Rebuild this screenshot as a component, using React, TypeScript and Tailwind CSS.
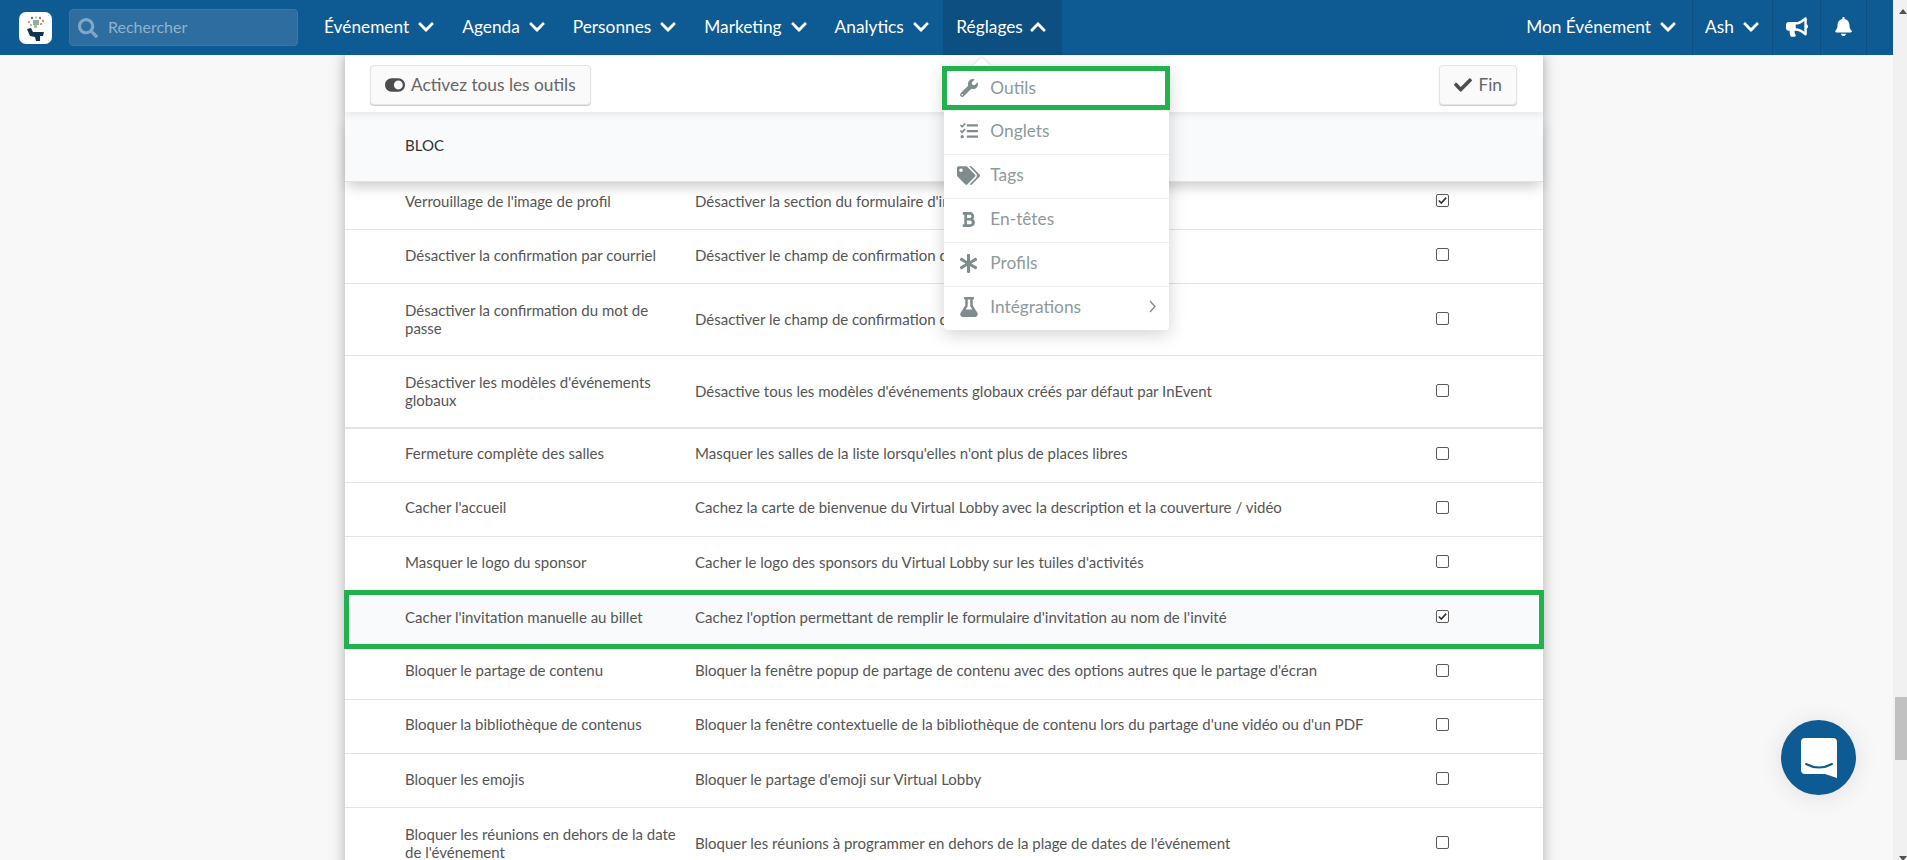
import {
  FaAsterisk,
  FaBell,
  FaBold,
  FaBullhorn,
  FaCheck,
  FaChevronDown,
  FaChevronUp,
  FaFlask,
  FaSearch,
  FaTags,
  FaTasks,
  FaToggleOn,
  FaWrench,
} from 'react-icons/fa';

const LEFT_MENU = ['Événement', 'Agenda', 'Personnes', 'Marketing', 'Analytics'];

const DROPDOWN = [
  { label: 'Outils', Icon: FaWrench, size: 18 },
  { label: 'Onglets', Icon: FaTasks, size: 18 },
  { label: 'Tags', Icon: FaTags, size: 23 },
  { label: 'En-têtes', Icon: FaBold, size: 17 },
  { label: 'Profils', Icon: FaAsterisk, size: 19 },
  { label: 'Intégrations', Icon: FaFlask, size: 20 },
];

const ROWS = [
  { name: "Verrouillage de l'image de profil", desc: "Désactiver la section du formulaire d'inscription pour l'image de profil", checked: true, height: 'h-[48px] pb-[10px]' },
  { name: 'Désactiver la confirmation par courriel', desc: 'Désactiver le champ de confirmation du courriel', height: 'h-[54px] pb-[4px]' },
  { name: 'Désactiver la confirmation du mot de passe', desc: 'Désactiver le champ de confirmation du mot de passe', height: 'h-[72px] pb-[2px]' },
  { name: "Désactiver les modèles d'événements globaux", desc: 'Désactive tous les modèles d\'événements globaux créés par défaut par InEvent', height: 'h-[73px] pb-[2px] border-b-2 border-b-[#dde1e3]' },
  { name: 'Fermeture complète des salles', desc: "Masquer les salles de la liste lorsqu'elles n'ont plus de places libres", height: 'h-[54px] pb-[5px]' },
  { name: "Cacher l'accueil", desc: 'Cachez la carte de bienvenue du Virtual Lobby avec la description et la couverture / vidéo', height: 'h-[54px] pb-[5px]' },
  { name: 'Masquer le logo du sponsor', desc: "Cacher le logo des sponsors du Virtual Lobby sur les tuiles d'activités", height: 'h-[54px] pb-[4px]' },
  { name: "Cacher l'invitation manuelle au billet", desc: "Cachez l'option permettant de remplir le formulaire d'invitation au nom de l'invité", checked: true, highlighted: true, height: 'h-[55px] pb-[4px]' },
  { name: 'Bloquer le partage de contenu', desc: "Bloquer la fenêtre popup de partage de contenu avec des options autres que le partage d'écran", height: 'h-[54px] pb-[5px]' },
  { name: 'Bloquer la bibliothèque de contenus', desc: "Bloquer la fenêtre contextuelle de la bibliothèque de contenu lors du partage d'une vidéo ou d'un PDF", height: 'h-[54px] pb-[5px]' },
  { name: 'Bloquer les emojis', desc: "Bloquer le partage d'emoji sur Virtual Lobby", height: 'h-[54px] pb-[4px]' },
  { name: "Bloquer les réunions en dehors de la date de l'événement", desc: "Bloquer les réunions à programmer en dehors de la plage de dates de l'événement", height: 'h-[72px] pb-[2px]' },
];

function Logo() {
  return (
    <div className="flex h-[32px] w-[33px] shrink-0 items-center justify-center rounded-[7px] bg-white">
      <svg width="26" height="26" viewBox="0 0 26 26">
        <circle cx="9" cy="3" r="1.2" fill="#4a7a96" />
        <circle cx="13" cy="2.5" r="1" fill="#e0a458" />
        <circle cx="17" cy="3" r="1.2" fill="#c9694f" />
        <circle cx="20" cy="6" r="1.2" fill="#d98e4a" />
        <circle cx="6" cy="7" r="1.2" fill="#d9a05b" />
        <rect x="10" y="5" width="6" height="5" fill="#8fb09c" />
        <circle cx="18" cy="9" r="1" fill="#c9694f" />
        <circle cx="8" cy="10" r="1" fill="#8ab0a0" />
        <rect x="11" y="10" width="3" height="3" fill="#c8b78a" />
        <path d="M4 14 L8 13 L10 17 L21 17 L20 21 L17 21 L17 26 L13 26 L12 22 L7 21 Z" fill="#12344d" />
      </svg>
    </div>
  );
}

function NavItem({ label }: { label: string }) {
  return (
    <div className="flex h-full items-center gap-[8px] px-[13.5px] pb-[2px]">
      <span>{label}</span>
      <FaChevronDown size={18} />
    </div>
  );
}

function SettingsMenu() {
  return (
    <div className="absolute left-px top-[66px] z-20 w-[225px] rounded-[4px] bg-white text-[17.3px] text-[#8d9a9b] shadow-[0_4px_18px_rgba(0,0,0,0.18)]">
      <div className="absolute -top-[6px] left-[31px] h-[13px] w-[13px] rotate-45 bg-white shadow-[-1px_-1px_2px_rgba(0,0,0,0.08)]" />
      {DROPDOWN.map(({ label, Icon, size }, i) => (
        <div
          key={label}
          className={
            i === 0
              ? 'relative flex h-[44px] items-center'
              : 'relative flex h-[44px] items-center border-t border-t-[#eeeeee] pb-[3px]'
          }
        >
          <div className="ml-[3px] flex w-[43px] justify-center text-[#7f8c8d]">
            <Icon size={size} />
          </div>
          <span>{label}</span>
          {label === 'Outils' && (
            <div className="absolute -left-[2px] -right-px inset-y-0 border-[5px] border-[#22b14c]" />
          )}
          {label === 'Intégrations' && (
            <svg className="absolute right-[13px] top-[13px] text-[#7f8c8d]" width="7" height="13" viewBox="0 0 7 13">
              <path d="M1 1 L6 6.5 L1 12" fill="none" stroke="currentColor" strokeWidth="1.4" />
            </svg>
          )}
        </div>
      ))}
    </div>
  );
}

function TopBar() {
  return (
    <header className="relative z-10 flex h-[55px] items-center bg-[#0e5a92] pl-[19px] text-[17.3px] text-white">
      <Logo />
      <div className="ml-[17px] flex h-[37px] w-[229px] items-center rounded-[4px] border border-[#3a77a6] bg-[#2e6da0] pl-[8px] text-[#8fb3cf]">
        <FaSearch size={20} className="text-[#7fa7c7]" />
        <span className="ml-[10px] pb-[2px] text-[16px]">Rechercher</span>
      </div>
      <nav className="ml-[12.5px] flex h-full items-center">
        {LEFT_MENU.map((label) => (
          <NavItem key={label} label={label} />
        ))}
        <div className="relative flex h-full items-center gap-[6px] bg-[#0d4f80] pb-[2px] pl-[13px] pr-[15px]">
          <span>Réglages</span>
          <FaChevronUp size={18} />
          <SettingsMenu />
        </div>
      </nav>
      <div className="ml-auto flex h-full items-center pr-[26px]">
        <div className="flex h-full items-center gap-[8px] pb-[2px] pr-[15px]">
          <span>Mon Événement</span>
          <FaChevronDown size={18} />
        </div>
        <div className="flex h-[55px] w-[80px] items-center justify-center gap-[8px] border-l border-l-[#0d4f80] pb-[2px]">
          <span>Ash</span>
          <FaChevronDown size={18} />
        </div>
        <div className="flex h-full w-[48px] items-center justify-center border-l border-l-[#0d4f80] pb-[2px]">
          <FaBullhorn size={22} />
        </div>
        <div className="flex h-full w-[47px] items-center justify-center border-x border-x-[#0d4f80] pb-[2px]">
          <FaBell size={19} />
        </div>
      </div>
    </header>
  );
}

function Toolbar() {
  const btn =
    'flex h-[40px] items-center gap-[6px] rounded-[4px] border border-[#e4e4e4] bg-[#fafafa] px-[14px] text-[17.3px] text-[#666666] shadow-[0_1px_1px_rgba(0,0,0,0.2)]';
  return (
    <div className="relative z-[3] flex h-[57px] items-start justify-between bg-white pl-[25px] pr-[26px] pt-[10px] shadow-[0_3px_6px_rgba(0,0,0,0.07)]">
      <button className={btn}>
        <FaToggleOn size={20} className="text-[#4d4d4d]" />
        Activez tous les outils
      </button>
      <button className={btn}>
        <FaCheck size={18} className="text-[#4d4d4d]" />
        Fin
      </button>
    </div>
  );
}

function CheckBox({ checked }: { checked?: boolean }) {
  return (
    <span className="relative h-[13px] w-[13px] shrink-0">
      <input
        type="checkbox"
        defaultChecked={!!checked}
        className="absolute inset-0 m-0 appearance-none rounded-[2px] border-[1.5px] border-[#5a5a5a] bg-white"
      />
      {checked && (
        <svg className="pointer-events-none absolute inset-0" width="13" height="13" viewBox="0 0 13 13">
          <path d="M2.8 6.5 L5.3 9 L10.2 3.6" fill="none" stroke="#333333" strokeWidth="1.6" />
        </svg>
      )}
    </span>
  );
}

function Row({ row }: { row: (typeof ROWS)[number] }) {
  const look = row.highlighted ? 'relative z-[1] bg-[#f9fafc]' : 'border-b border-b-[#e3e3e3]';
  return (
    <div className={`flex items-center pl-[60px] pr-[94px] text-[15px] leading-[18px] text-[#555555] ${row.height} ${look}`}>
      <div className="w-[290px] shrink-0 pr-[12px]">{row.name}</div>
      <div className="flex-1">{row.desc}</div>
      <CheckBox checked={row.checked} />
      {row.highlighted && <div className="absolute -inset-x-px -bottom-[3px] -top-px border-[5px] border-[#22b14c]" />}
    </div>
  );
}

function Scrollbar() {
  return (
    <div className="relative w-[14px] shrink-0 bg-[#f1f1f1]">
      <div className="absolute left-[6px] top-[9px] h-0 w-0 border-x-[4px] border-b-[5px] border-x-transparent border-b-[#505050]" />
      <div className="absolute left-[2px] top-[697px] h-[63px] w-[12px] bg-[#c1c1c1]" />
      <div className="absolute bottom-[-1px] left-[6px] h-0 w-0 border-x-[4px] border-t-[5px] border-x-transparent border-t-[#505050]" />
    </div>
  );
}

export default function App() {
  return (
    <div className="relative flex h-[860px] w-[1907px] overflow-hidden bg-[#f8f8f8] font-['Lato',sans-serif]">
      <div className="relative flex min-w-0 flex-1 flex-col">
        <TopBar />
        <main className="ml-[345px] w-[1198px] flex-1 bg-white shadow-[0_0_14px_rgba(0,0,0,0.3)]">
          <Toolbar />
          <div className="relative z-[2] flex h-[70px] items-center border-b border-b-[#e3e3e3] bg-[#f9fafc] pb-[3px] pl-[60px] text-[15px] text-[#333333] shadow-[0_8px_12px_-3px_rgba(0,0,0,0.2)]">
            BLOC
          </div>
          {ROWS.map((row) => (
            <Row key={row.name} row={row} />
          ))}
        </main>
        <button className="absolute left-[1781px] top-[720px] flex h-[75px] w-[75px] items-center justify-center rounded-full bg-[#0e5a92] shadow-[0_2px_24px_rgba(0,0,0,0.1)]">
          <svg width="36" height="40" viewBox="0 0 36 40">
            <path d="M4 0 H32 Q36 0 36 4 V40 L24 36 H4 Q0 36 0 32 V4 Q0 0 4 0 Z" fill="#fff" />
            <path d="M5 26 Q18 33 31 26" fill="none" stroke="#0e5a92" strokeWidth="2" strokeLinecap="round" />
          </svg>
        </button>
      </div>
      <Scrollbar />
    </div>
  );
}
